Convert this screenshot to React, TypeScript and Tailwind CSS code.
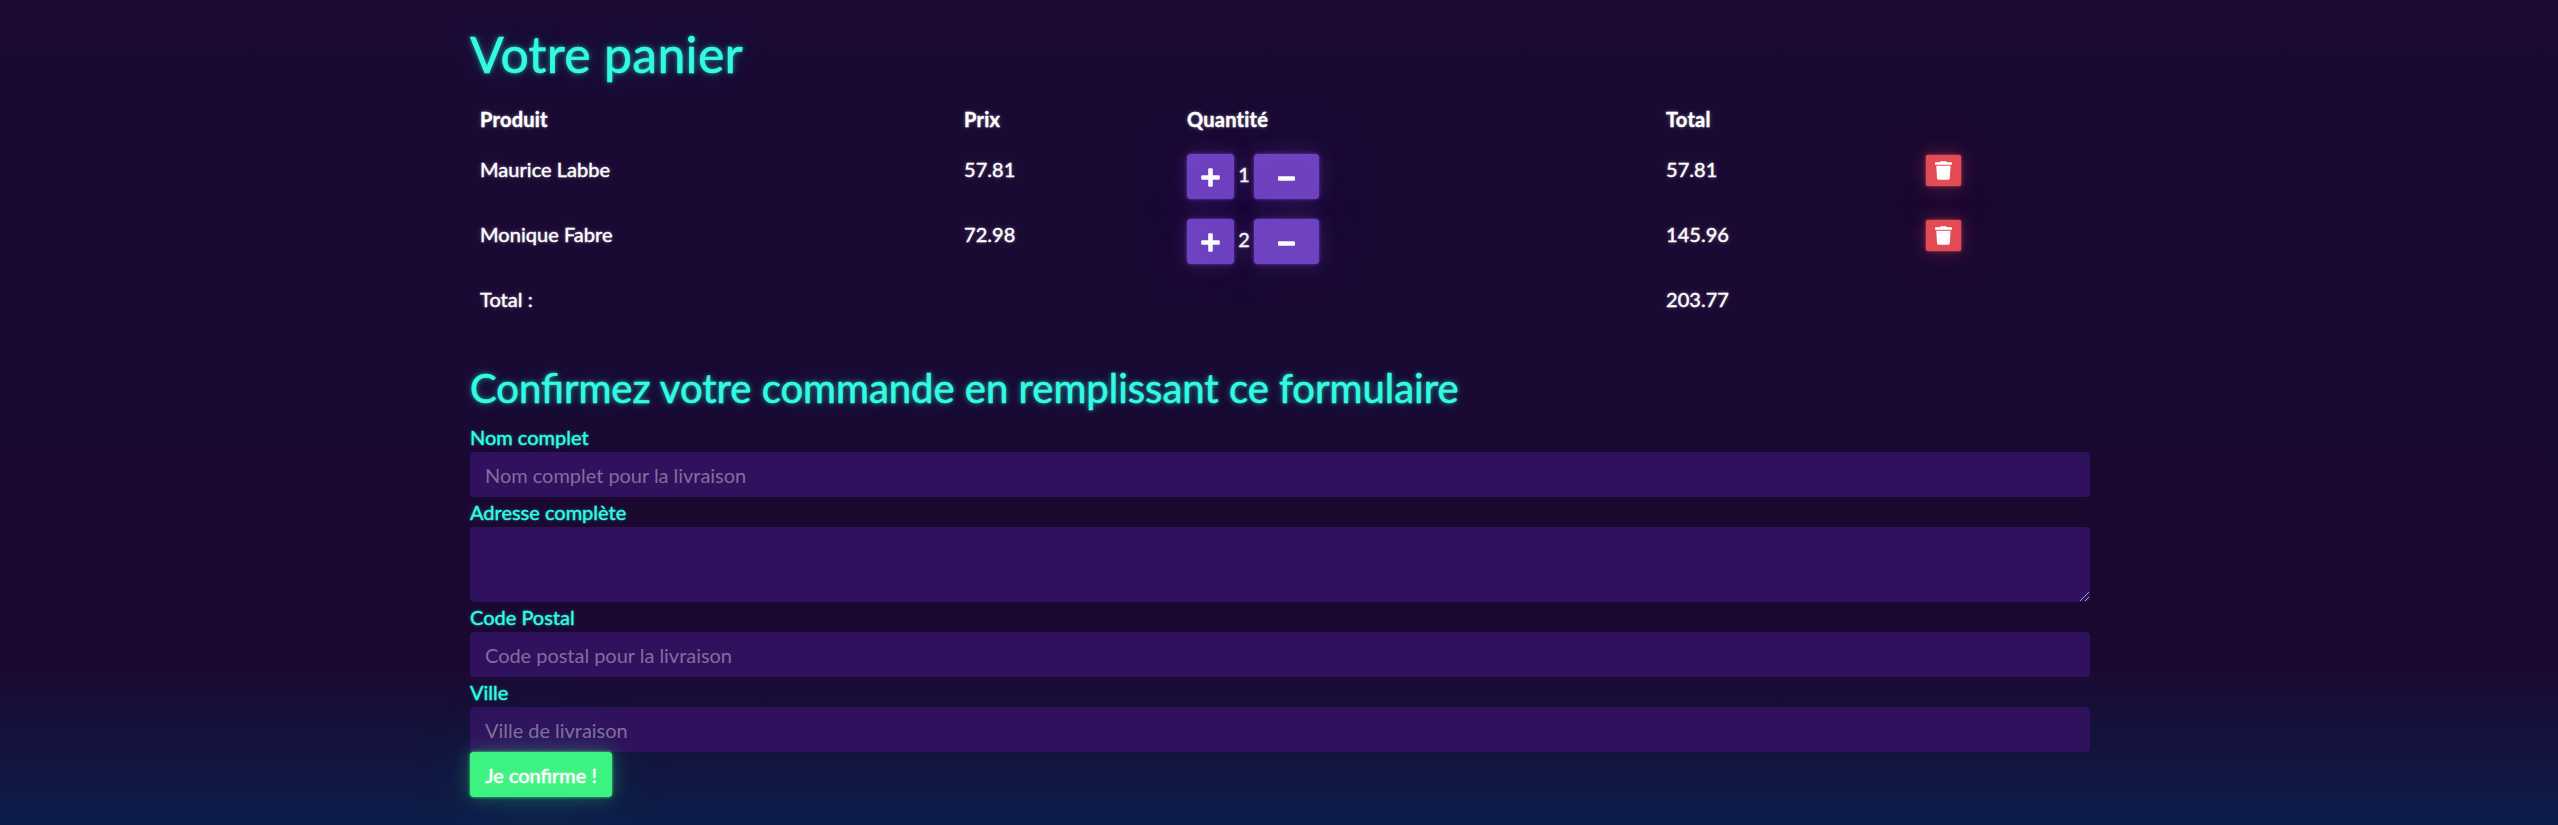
const glow =
  "[-webkit-text-stroke:0.4px_#32fbe2] [text-shadow:0_0_1px_rgba(50,251,226,.6),0_0_4px_rgba(50,251,226,.5),0_0_10px_rgba(50,251,226,.3),0_0_40px_rgba(50,251,226,.2)]";
const labelClass =
  "block h-[30px] text-[20px] leading-[30px] text-[#32fbe2] [-webkit-text-stroke:0.3px_#32fbe2] [text-shadow:0_0_1px_rgba(50,251,226,.3),0_0_3px_rgba(50,251,226,.3),0_0_6px_rgba(50,251,226,.2)]";
const fieldClass =
  "block w-full rounded-[4px] bg-[#30115e] px-[15px] text-[20px] leading-[30px] tracking-[-0.03px] text-white outline-none placeholder:text-[#836c9e]";
const purpleBtn =
  "flex h-[45px] items-center justify-center rounded-[4px] bg-[#6f42c1] text-white shadow-[0_0_2px_rgba(111,66,193,.9),0_0_5px_rgba(111,66,193,.4),0_0_20px_rgba(111,66,193,.3),0_0_80px_rgba(111,66,193,.1)]";

const items = [
  { name: "Maurice Labbe", price: "57.81", qty: 1, total: "57.81" },
  { name: "Monique Fabre", price: "72.98", qty: 2, total: "145.96" },
];

const cols = "grid grid-cols-[484px_223px_479px_260px_1fr] px-[10px]";

function Plus() {
  return (
    <svg width="19" height="19" viewBox="0 0 19 19" fill="currentColor">
      <rect x="7.2" y="0.3" width="4.6" height="18.4" rx="1.2" />
      <rect x="0.2" y="7.2" width="18.6" height="4.6" rx="1.2" />
    </svg>
  );
}

function Minus() {
  return (
    <svg width="17" height="19" viewBox="0 0 17 19" fill="currentColor">
      <rect x="0" y="7.2" width="17" height="4.6" rx="1.1" />
    </svg>
  );
}

function Trash() {
  return (
    <svg width="17" height="19" viewBox="0 0 17 19" fill="currentColor">
      <path d="M.7 1.300H5l.7-1.100h5.600l.7 1.100h4.300q.7 0 .7.700v1.800H0V2q0-.7.700-.7zM1.300 4.700h14.200l-.7 12.600q-.1 1.400-1.500 1.400H3.500q-1.400 0-1.500-1.400z" />
    </svg>
  );
}

export default function App() {
  return (
    <div className="flex h-[825px] w-full overflow-hidden bg-[linear-gradient(180deg,#1d0a35_0px,#1a0933_50px,#1a0932_400px,#1b0830_658px,#0c1d4a_825px)] pl-[470px] font-['Lato',sans-serif] text-[20px] leading-[30px] text-white">
      <main className="w-[1620px] pt-[24px]">
        <h1 className={"mb-[10px] text-[50px] leading-[60px] tracking-[0.28px] text-[#32fbe2] " + glow}>
          Votre panier
        </h1>
        <section className="tracking-[0.04px] [-webkit-text-stroke:0.3px_white] [text-shadow:0_0_1px_rgba(255,255,255,.3),0_0_3px_rgba(255,255,255,.3),0_0_6px_rgba(255,255,255,.2)]">
          <div className={cols + " h-[50px] pt-[10px] font-bold tracking-[0.25px]"}>
            <span>Produit</span>
            <span>Prix</span>
            <span>Quantité</span>
            <span>Total</span>
          </div>
          {items.map((it) => (
            <div key={it.name} className={cols + " h-[65px] items-start pt-[10px]"}>
              <span>{it.name}</span>
              <span>{it.price}</span>
              <div className="flex">
                <button className={purpleBtn + " w-[47px] pt-[2px]"}>
                  <Plus />
                </button>
                <span className="w-[20px] pt-[5px] text-center">{it.qty}</span>
                <button className={purpleBtn + " w-[65px] pt-[3px]"}>
                  <Minus />
                </button>
              </div>
              <span>{it.total}</span>
              <button className="mt-[1px] flex h-[31px] w-[35px] items-center justify-center rounded-[2px] bg-[#e44c55] text-white shadow-[0_0_2px_rgba(228,76,85,.9),0_0_5px_rgba(228,76,85,.4),0_0_20px_rgba(228,76,85,.3),0_0_80px_rgba(228,76,85,.1)]">
                <Trash />
              </button>
            </div>
          ))}
          <div className={cols + " h-[50px] pt-[10px]"}>
            <span>Total :</span>
            <span />
            <span />
            <span>203.77</span>
          </div>
        </section>
        <h2 className={"mt-[40px] mb-[10px] text-[40px] leading-[48px] text-[#32fbe2] " + glow}>
          Confirmez votre commande en remplissant ce formulaire
        </h2>
        <form>
          <label className={labelClass}>Nom complet</label>
          <input className={fieldClass + " h-[45px]"} placeholder="Nom complet pour la livraison" />
          <label className={labelClass}>Adresse complète</label>
          <div className="relative">
            <textarea className={fieldClass + " h-[75px] resize-none"} />
            <svg
              className="absolute right-0 bottom-0"
              width="11"
              height="11"
              viewBox="0 0 11 11"
              stroke="#b9aecb"
              strokeWidth="0.9"
            >
              <path d="M1 10L10 1M6 10l4-4" />
            </svg>
          </div>
          <label className={labelClass}>Code Postal</label>
          <input className={fieldClass + " h-[45px]"} placeholder="Code postal pour la livraison" />
          <label className={labelClass}>Ville</label>
          <input className={fieldClass + " h-[45px]"} placeholder="Ville de livraison" />
          <button
            type="button"
            className="relative block h-[45px] w-[142px] rounded-[4px] bg-[#3cf281] pt-[1px] text-center text-white shadow-[0_0_2px_rgba(60,242,129,.9),0_0_5px_rgba(60,242,129,.4),0_0_20px_rgba(60,242,129,.3),0_0_80px_rgba(60,242,129,.1)] [-webkit-text-stroke:0.3px_white] [text-shadow:0_0_1px_rgba(255,255,255,.3),0_0_3px_rgba(255,255,255,.3),0_0_6px_rgba(255,255,255,.2)]"
          >
            Je confirme !
          </button>
        </form>
      </main>
    </div>
  );
}
